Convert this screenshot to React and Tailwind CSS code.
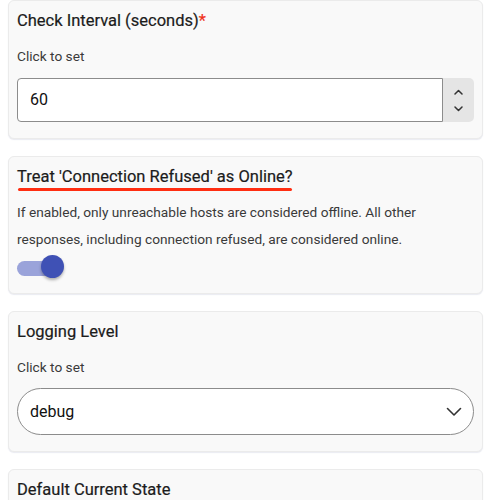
import React from "react";

function Card({ children }) {
  return (
    <div className="bg-[#f9f9f9] border border-[#ebebeb] rounded-[6px] shadow-[0_1px_1px_rgba(70,80,140,0.12)] pl-2 pr-2 pt-2">
      {children}
    </div>
  );
}

function Title({ children }) {
  return (
    <div className="text-[16.5px] leading-[24px] font-normal text-[#1c1c1c] [-webkit-text-stroke:0.2px_#1c1c1c]">{children}</div>
  );
}

export default function App() {
  return (
    <div
      className="bg-white w-[491px] h-[500px] overflow-hidden px-2 flex flex-col gap-[17px]"
      style={{ fontFamily: "Roboto, 'Noto Sans', sans-serif" }}
    >
      <Card>
        <Title>
          Check Interval (seconds)<span className="text-[#f0311a] [-webkit-text-stroke:0.2px_#f0311a]">*</span>
        </Title>
        <div className="mt-[13px] text-[13.7px] leading-[20px] text-[#3a3a3a]">Click to set</div>
        <div className="mt-3 mb-4 flex h-[44px]">
          <div className="flex-1 bg-white border border-[#8c8c8c] rounded-l-[4px] flex items-center pl-3 text-[16px] text-[#111]">
            60
          </div>
          <div className="w-[31px] bg-[#e5e5e5] rounded-r-[5px] flex flex-col items-center justify-center gap-[11px]">
            <svg width="9" height="6" viewBox="0 0 9 6" fill="none">
              <path d="M1 5L4.5 1.5L8 5" stroke="#333" strokeWidth="1.5" strokeLinecap="round" strokeLinejoin="round" />
            </svg>
            <svg width="9" height="6" viewBox="0 0 9 6" fill="none">
              <path d="M1 1L4.5 4.5L8 1" stroke="#333" strokeWidth="1.5" strokeLinecap="round" strokeLinejoin="round" />
            </svg>
          </div>
        </div>
      </Card>

      <Card>
        <div className="inline-flex flex-col">
          <Title>Treat 'Connection Refused' as Online?</Title>
          <div className="h-[3px] -mt-[1px] mx-[1px] rounded-full bg-[#ff2e12]" />
        </div>
        <div className="mt-[8px] text-[13.7px] leading-[27px] text-[#3a3a3a]">
          If enabled, only unreachable hosts are considered offline. All other responses, including connection refused, are considered online.
        </div>
        <div className="relative h-[24px] w-[48px] mt-[2px] mb-[14px]">
          <div className="absolute left-0 top-[6px] w-[40px] h-[15px] rounded-full bg-[#9aa3da]" />
          <div className="absolute left-[24px] top-0 w-[23px] h-[23px] rounded-full bg-[#3f51b5] shadow-[0_2px_3px_rgba(0,0,0,0.3)]" />
        </div>
      </Card>

      <Card>
        <Title>Logging Level</Title>
        <div className="mt-[13px] text-[13.7px] leading-[20px] text-[#3a3a3a]">Click to set</div>
        <div className="mt-[11px] mb-4 h-[47px] bg-white border border-[#8c8c8c] rounded-full flex items-center justify-between pl-3 pr-[11px] text-[16px] text-[#111]">
          <span>debug</span>
          <svg width="16" height="10" viewBox="0 0 16 10" fill="none">
            <path d="M1.5 1.5L8 8L14.5 1.5" stroke="#333" strokeWidth="1.6" strokeLinecap="round" strokeLinejoin="round" />
          </svg>
        </div>
      </Card>

      <Card>
        <Title>Default Current State</Title>
        <div className="h-[60px]" />
      </Card>
    </div>
  );
}
